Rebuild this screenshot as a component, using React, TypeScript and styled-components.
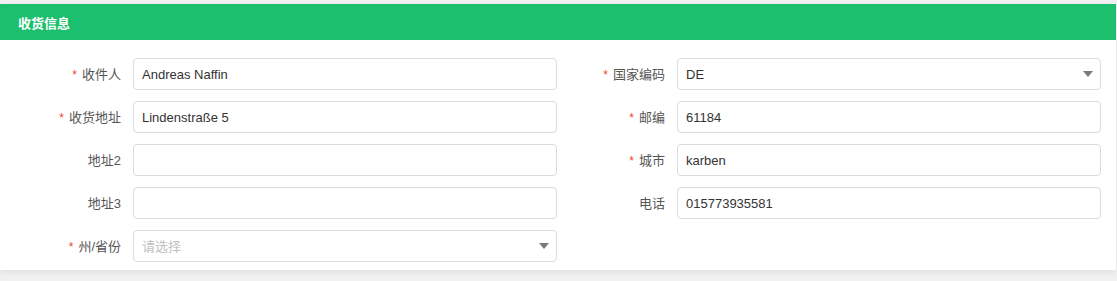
import React from 'react';
import styled, { createGlobalStyle } from 'styled-components';

const GlobalStyle = createGlobalStyle`
  html, body {
    margin: 0;
    padding: 0;
    background: #f1f1f1;
    font-family: "Liberation Sans", "Noto Sans CJK SC", sans-serif;
  }
`;

const Page = styled.div`
  padding: 4px 1px 0 0;
  height: 277px;
`;

const Panel = styled.section`
  background: #fff;
  box-shadow: 0 2px 6px rgba(0, 0, 0, 0.08);
`;

const Header = styled.div`
  height: 36px;
  background: #1bbf6d;
  display: flex;
  align-items: center;
  padding-left: 18px;
  color: #fff;
  font-size: 13px;
  font-weight: 700;
`;

const Form = styled.div`
  display: grid;
  grid-template-columns: 121px 424px 96px 424px;
  column-gap: 12px;
  row-gap: 11px;
  padding: 18px 0 8px;
`;

const Label = styled.label`
  display: flex;
  align-items: center;
  justify-content: flex-end;
  padding-bottom: 2px;
  font-size: 13px;
  color: #555;
  white-space: nowrap;
`;

const Star = styled.span`
  position: relative;
  top: 2px;
  color: #f0441c;
  margin-right: 5px;
  font-size: 12px;
`;

const Input = styled.input`
  box-sizing: border-box;
  width: 100%;
  height: 32px;
  border: 1px solid #dcdcdc;
  border-radius: 4px;
  padding: 0 8px;
  font-family: inherit;
  font-size: 13px;
  color: #333;
  outline: none;
  &::placeholder {
    color: #c0c0c0;
  }
`;

const SelectBox = styled.div`
  position: relative;
`;

const Caret = styled.span`
  position: absolute;
  right: 8px;
  top: 13px;
  width: 0;
  height: 0;
  border-left: 5px solid transparent;
  border-right: 5px solid transparent;
  border-top: 6px solid #7a7a7a;
`;

const Empty = styled.div``;

type FieldProps = { label: string; required?: boolean };

const FieldLabel: React.FC<FieldProps> = ({ label, required }) => (
  <Label>
    {required && <Star>*</Star>}
    {label}
  </Label>
);

const Select: React.FC<{ value?: string; placeholder?: string }> = ({ value, placeholder }) => (
  <SelectBox>
    <Input readOnly defaultValue={value} placeholder={placeholder} />
    <Caret />
  </SelectBox>
);

const App: React.FC = () => (
  <>
    <GlobalStyle />
    <Page>
      <Panel>
        <Header>收货信息</Header>
        <Form>
          <FieldLabel label="收件人" required />
          <Input defaultValue="Andreas Naffin" />
          <FieldLabel label="国家编码" required />
          <Select value="DE" />

          <FieldLabel label="收货地址" required />
          <Input defaultValue="Lindenstraße 5" />
          <FieldLabel label="邮编" required />
          <Input defaultValue="61184" />

          <FieldLabel label="地址2" />
          <Input />
          <FieldLabel label="城市" required />
          <Input defaultValue="karben" />

          <FieldLabel label="地址3" />
          <Input />
          <FieldLabel label="电话" />
          <Input defaultValue="015773935581" />

          <FieldLabel label="州/省份" required />
          <Select placeholder="请选择" />
          <Empty />
          <Empty />
        </Form>
      </Panel>
    </Page>
  </>
);

export default App;
